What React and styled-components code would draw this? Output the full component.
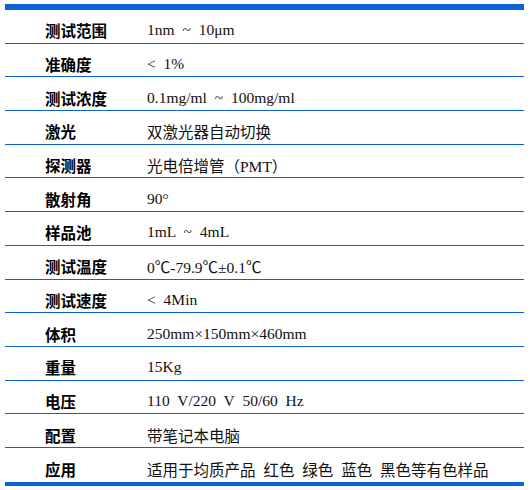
import React from "react";
import styled, { createGlobalStyle } from "styled-components";

const specs = [
  ["测试范围", "1nm ~ 10μm"],
  ["准确度", "< 1%"],
  ["测试浓度", "0.1mg/ml ~ 100mg/ml"],
  ["激光", "双激光器自动切换"],
  ["探测器", "光电倍增管（PMT）"],
  ["散射角", "90°"],
  ["样品池", "1mL ~ 4mL"],
  ["测试温度", "0℃-79.9℃±0.1℃"],
  ["测试速度", "< 4Min"],
  ["体积", "250mm×150mm×460mm"],
  ["重量", "15Kg"],
  ["电压", "110 V/220 V 50/60 Hz"],
  ["配置", "带笔记本电脑"],
  ["应用", "适用于均质产品 红色 绿色 蓝色 黑色等有色样品"],
];

const GlobalStyle = createGlobalStyle`
  body {
    margin: 0;
    background: #fff;
  }
`;

const Page = styled.div`
  padding: 4px 6px 0 5px;
`;

const Table = styled.div`
  border-top: 6px solid #0c62d0;
  border-bottom: 4px solid #0c62d0;
`;

const Row = styled.div`
  display: grid;
  grid-template-columns: 142px 1fr;
  align-items: center;
  box-sizing: border-box;
  height: 33.7px;
  padding-top: 8px;
  border-bottom: ${(p) => (p.$last ? "none" : "1px solid #0c62d0")};
`;

const Label = styled.div`
  padding-left: 40px;
  font-family: "Noto Sans CJK SC", sans-serif;
  font-weight: 700;
  font-size: 15.5px;
  color: #000;
  white-space: nowrap;
`;

const Value = styled.div`
  font-family: "Liberation Serif", "Noto Sans CJK SC", serif;
  font-size: 15.5px;
  word-spacing: 4px;
  color: #111;
  white-space: nowrap;
`;

export default function App() {
  return (
    <Page>
      <GlobalStyle />
      <Table>
        {specs.map(([label, value], i) => (
          <Row key={label} $last={i === specs.length - 1}>
            <Label>{label}</Label>
            <Value>{value}</Value>
          </Row>
        ))}
      </Table>
    </Page>
  );
}
